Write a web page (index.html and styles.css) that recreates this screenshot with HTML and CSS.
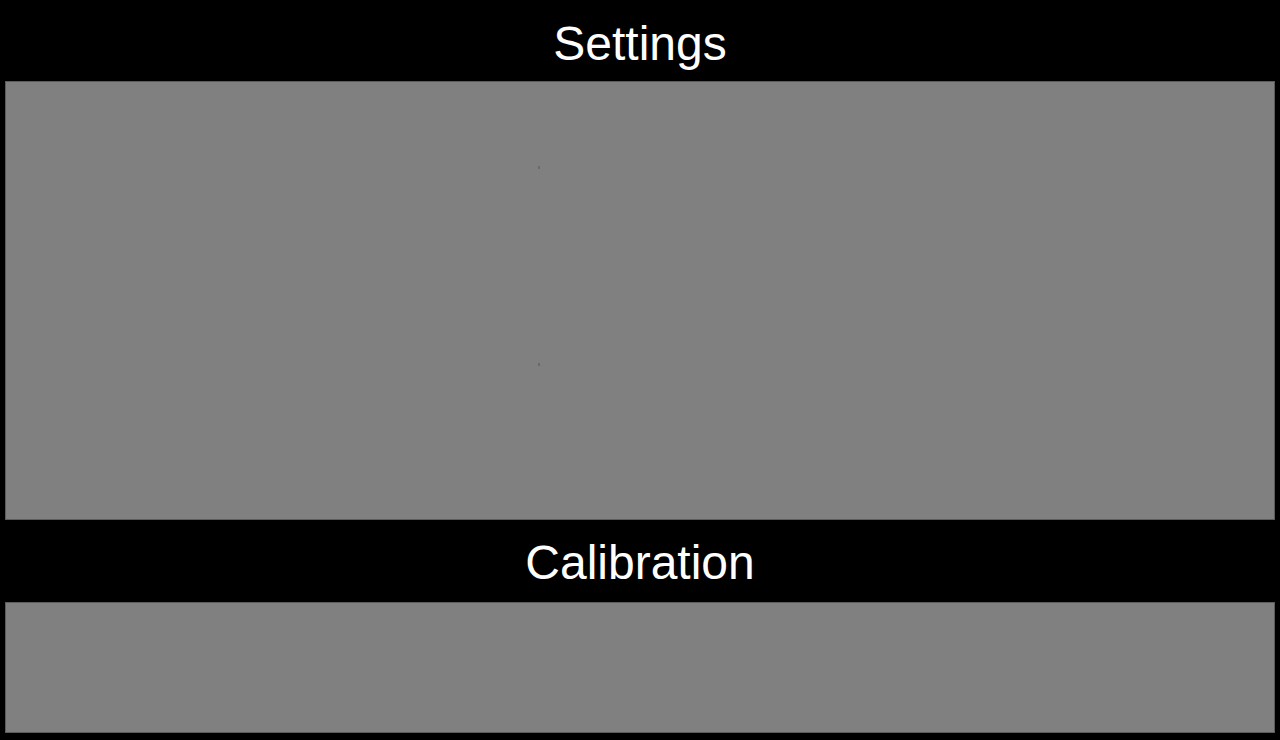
FILE: index.html
```html
<!DOCTYPE html>
<html>
    <head>
        <meta charset="UTF-8">
        <meta name="viewport" content="width=device-width, initial-scale=1.0">
        <title>Settings</title>
        <link rel="stylesheet" href="styles.css">
    </head>
    <body>
        <div id="app">
            <div class="title" id="settings-title">Settings</div>
            <div class="panel" id="settings">
                <span class="mark"></span>
                <span class="mark"></span>
            </div>
            <div class="title" id="calibration-title">Calibration</div>
            <div class="panel" id="calibration"></div>
        </div>
    </body>
</html>
```
FILE: styles.css
```css
html, body {
    margin:0;
    background-color:black;
}
#app {
    display:flex;
    flex-direction:column;
    width:1280px;
    height:740px;
}
.title {
    color:white;
    font-family:"Liberation Sans", Arial, sans-serif;
    font-size:48px;
    text-align:center;
}
#settings-title {
    height:81px;
    line-height:87px;
}
#calibration-title {
    height:82px;
    line-height:85px;
}
.panel {
    background-color:#808080;
    border:1px solid #5c5c5c;
    margin:0 5px;
    box-sizing:border-box;
}
#settings {
    height:439px;
    display:flex;
    flex-direction:column;
    gap:194px;
    padding:84px 0 0 532px;
}
#calibration {
    height:131px;
}
.mark {
    display:block;
    width:2px;
    height:3px;
    background-color:#6a6a6a;
}
```
